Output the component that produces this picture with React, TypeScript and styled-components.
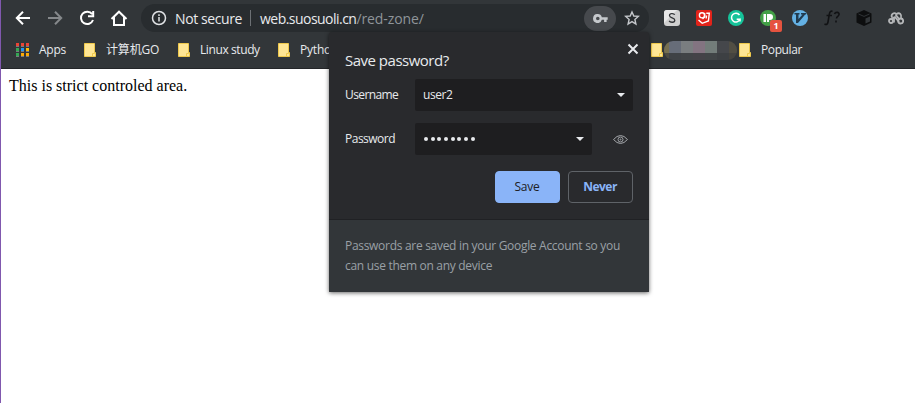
import React from 'react';
import styled, { createGlobalStyle } from 'styled-components';

const Global = createGlobalStyle`
  * { box-sizing: border-box; }
  html, body { margin: 0; background: #fff; overflow: hidden; }
  body { font-family: "Open Sans", "Noto Sans CJK SC", sans-serif; font-size: 12px; }
  svg { display: block; flex: none; }
`;

const Window = styled.div`
  position: relative;
  width: 915px;
  height: 403px;
  border-left: 1px solid #8058ae;
  background: #fff;
`;

const Chrome = styled.header`
  height: 69px;
  background: #323639;
  border-bottom: 1px solid #242629;
`;

const Toolbar = styled.div`
  display: flex;
  align-items: center;
  height: 36px;
  padding-left: 12px;
`;

const NavButton = styled.button`
  width: 20px;
  height: 20px;
  margin-right: 12px;
  padding: 0;
  border: 0;
  background: none;
`;

const Omnibox = styled.div`
  display: flex;
  align-items: center;
  width: 508px;
  height: 28px;
  padding: 0 9px 0 10px;
  border-radius: 14px;
  background: #282c2f;
`;

const Text = styled.span<{ $w?: number; $size?: number; $ls?: number; $color?: string }>`
  flex: none;
  width: ${p => (p.$w ? `${p.$w}px` : 'auto')};
  font-size: ${p => p.$size ?? 12}px;
  letter-spacing: ${p => p.$ls ?? 0}px;
  color: ${p => p.$color ?? '#e8eaed'};
  white-space: nowrap;
`;

const SecurityLabel = styled(Text)`
  margin-left: 8px;
`;

const Separator = styled.i`
  width: 1px;
  height: 16px;
  margin-right: 9px;
  background: #6c7074;
`;

const KeyPill = styled.div`
  display: grid;
  place-items: center;
  width: 32px;
  height: 25px;
  margin: 0 8px 0 auto;
  border-radius: 13px;
  background: #46494d;
`;

const Extensions = styled.div`
  display: flex;
  gap: 16px;
  margin-left: 15px;
`;

const Extension = styled.div`
  position: relative;
  width: 16px;
  height: 16px;
`;

const Badge = styled.span`
  position: absolute;
  left: 10px;
  top: 10px;
  width: 12px;
  height: 12px;
  border-radius: 2px;
  background: #e5533f;
  color: #fff;
  font: bold 9px/12px "Open Sans", sans-serif;
  text-align: center;
`;

const Bookmarks = styled.nav`
  display: flex;
  align-items: center;
  height: 28px;
  padding-left: 15px;
`;

const Bookmark = styled.div<{ $w: number }>`
  display: flex;
  align-items: center;
  gap: 10px;
  flex: none;
  width: ${p => p.$w}px;

  ${Text} {
    padding-bottom: 2px;
  }
`;

const Mosaic = styled.div`
  display: grid;
  flex: none;
  grid-template-columns: 5px 12px 12px 12px 12px 12px 8px;
  grid-template-rows: 12px 7px;
  width: 73px;
  height: 19px;
  margin: 1px 2px 0 1px;
  border-radius: 9px;
  overflow: hidden;
`;

const Cell = styled.i<{ $c: string }>`
  background: ${p => p.$c};
`;

const Page = styled.main`
  padding: 8px;
  font: 16px/18px "Liberation Serif", "Times New Roman", serif;
  color: #000;
`;

const Dialog = styled.section`
  position: absolute;
  left: 328px;
  top: 32px;
  width: 320px;
  height: 260px;
  border-radius: 3px 3px 1px 1px;
  background: #292a2d;
  box-shadow: 0 1px 4px rgba(0, 0, 0, 0.6);
  display: flex;
  flex-direction: column;
`;

const DialogBody = styled.div`
  height: 188px;
  padding: 9px 16px 0;
  border-bottom: 1px solid #202124;
`;

const TitleRow = styled.div`
  display: flex;
  justify-content: space-between;
  align-items: flex-start;
  height: 38px;
  margin-right: -8px;
`;

const Title = styled.h1`
  margin: 9px 0 0;
  font-size: 15px;
  line-height: 20px;
  font-weight: 400;
  letter-spacing: -0.5px;
  color: #e8eaed;
`;

const Field = styled.div`
  display: flex;
  align-items: center;
  height: 32px;
  margin-bottom: 12px;

  ${Text} {
    padding-bottom: 1px;
  }
`;

const Combo = styled.div<{ $w: number }>`
  display: flex;
  flex: none;
  align-items: center;
  justify-content: space-between;
  width: ${p => p.$w}px;
  height: 32px;
  padding: 0 8px;
  border-radius: 2px;
  background: #1e1e20;
`;

const Dots = styled.div`
  display: flex;
  gap: 2.67px;
  padding-left: 1px;
`;

const Dot = styled.i`
  width: 4px;
  height: 4px;
  border-radius: 50%;
  background: #e8eaed;
`;

const Actions = styled.div`
  display: flex;
  justify-content: flex-end;
  gap: 8px;
  margin-top: 16px;
`;

const Action = styled.button<{ $primary?: boolean }>`
  width: 65px;
  height: 32px;
  padding: 0 1px 1px 0;
  border: 1px solid ${p => (p.$primary ? '#8ab4f8' : '#5f6368')};
  border-radius: 4px;
  background: ${p => (p.$primary ? '#8ab4f8' : 'transparent')};
  color: ${p => (p.$primary ? '#202124' : '#8ab4f8')};
  font: ${p => (p.$primary ? 400 : 700)} 12px "Open Sans", sans-serif;
  letter-spacing: ${p => (p.$primary ? -0.2 : -0.5)}px;
`;

const Footer = styled.p`
  flex: 1;
  margin: 0;
  padding: 16px 16px 0;
  border-radius: 0 0 1px 1px;
  background: #323639;
  color: #9aa0a6;
  line-height: 20px;
  letter-spacing: -0.3px;
  white-space: nowrap;
`;

const Folder = () => (
  <svg width="12" height="14" viewBox="0 0 12 14">
    <path d="M.5.5h10v9h1v4H.5z" fill="#ffe694" stroke="#efc94c" />
    <path d="M8.5 13.5v-3h2v-1" fill="none" stroke="#efc94c" />
  </svg>
);

const Caret = () => (
  <svg width="8" height="4" viewBox="0 0 8 4"><path d="M0 0h8L4 4z" fill="#e8eaed" /></svg>
);

const appColors = ['#ea4335', '#ea4335', '#ea4335', '#34a853', '#2196f3', '#fbbc05', '#34a853', '#fbaa05', '#fbaa05'];
const AppsIcon = () => (
  <svg width="13" height="14" viewBox="0 0 13 14">
    {appColors.map((c, i) => (
      <g key={i}>
        <rect x={(i % 3) * 5} y={Math.floor(i / 3) * 5} width="3" height="3" fill={c} />
        <rect x={(i % 3) * 5} y={Math.floor(i / 3) * 5 + 3} width="3" height="1" fill="#777b7e" />
      </g>
    ))}
  </svg>
);

const navPaths = [
  'M17 10H4.2M10 3.8 3.8 10l6.2 6.2',
  'M3 10h12.8M10 3.8l6.2 6.2-6.2 6.2',
  'M15.2 6.2A6.2 6.2 0 1 0 16 12M16.2 3v5.3H11',
  'M5 9v8h10V9M2.5 11 10 3.7l7.5 7.3',
];

const mosaicTop = ['#766f50', '#676d79', '#7a7e80', '#837481', '#737d7a', '#45474b', '#514e43'];
const mosaicBottom = ['#4d4b42', '#3f4246', '#414447', '#444348', '#414547', '#3d4043', '#45443f'];

export default function App() {
  return (
    <>
      <Global />
      <Window>
        <Chrome>
          <Toolbar>
            {navPaths.map((d, i) => (
              <NavButton key={d}>
                <svg width="20" height="20" viewBox="0 0 20 20" fill="none" stroke={i === 1 ? '#85888b' : '#fff'} strokeWidth="2">
                  <path d={d} />
                </svg>
              </NavButton>
            ))}
            <Omnibox>
              <svg width="16" height="16" viewBox="0 0 16 16" fill="none" stroke="#e0e2e5" strokeWidth="1.5">
                <circle cx="8" cy="8" r="6.5" />
                <path d="M8 7v4.5M8 4.3v1.6" />
              </svg>
              <SecurityLabel $w={75} $size={14} $ls={-0.4}>Not secure</SecurityLabel>
              <Separator />
              <Text $size={14} $ls={-0.53}>web.suosuoli.cn</Text>
              <Text $size={14} $ls={-0.1} $color="#8f959a">/red-zone/</Text>
              <KeyPill>
                <svg width="15" height="9" viewBox="0 0 16 10" fill="#c5c8cc">
                  <path fillRule="evenodd" d="M5 0a5 5 0 1 0 4.5 6.5H12V9h2.8V6.5H16v-3H9.5A5 5 0 0 0 5 0zm0 3a2 2 0 1 1 0 4 2 2 0 0 1 0-4z" />
                </svg>
              </KeyPill>
              <svg width="16" height="16" viewBox="0 0 16 16" fill="none" stroke="#c5c8cc" strokeWidth="1.4">
                <path d="m8 2 1.8 4 4.5.4-3.4 3 1 4.6L8 11.6 4.1 14l1-4.6-3.4-3L6.2 6z" />
              </svg>
            </Omnibox>
            <Extensions>
              <Extension>
                <svg width="16" height="16" viewBox="0 0 16 16">
                  <rect width="16" height="16" rx="3" fill="#cfcfcf" />
                  <path d="M0 13 13 0H3a3 3 0 0 0-3 3z" fill="#e8e8e8" />
                  <path d="M10.7 4.8C9.8 3.1 5.500 3.1 5.500 5.500c0 2.7 5.3 2 5.3 4.7 0 2.7-4.6 2.500-5.700.7" fill="none" stroke="#303235" strokeWidth="1.3" />
                </svg>
              </Extension>
              <Extension>
                <svg width="16" height="16" viewBox="0 0 16 16" fill="none" stroke="#fff" strokeWidth="1.4">
                  <rect width="16" height="16" rx="2" fill="#e2231a" stroke="none" />
                  <circle cx="6" cy="5.3" r="2.6" />
                  <path d="M8.6 3v4L6.500 9M10.300 3.300h3l-.9 7.700-6.200 2.300-3.700-3.300M10.500 5.500l-.3 3" />
                </svg>
              </Extension>
              <Extension>
                <svg width="16" height="16" viewBox="0 0 16 16">
                  <circle cx="8" cy="8" r="8" fill="#15c39a" />
                  <path d="M11.5 5A4.4 4.4 0 1 0 12 9.3H8.7M12 9v2.5" fill="none" stroke="#fff" strokeWidth="1.5" />
                </svg>
              </Extension>
              <Extension>
                <svg width="16" height="16" viewBox="0 0 16 16">
                  <circle cx="8" cy="8" r="8" fill="#43a047" />
                  <path d="M3.5 4H6v8H3.5zM7 4h3a3 3 0 0 1 0 6H9v2H7z" fill="#fff" />
                </svg>
                <Badge>1</Badge>
              </Extension>
              <Extension>
                <svg width="16" height="16" viewBox="0 0 16 16">
                  <circle cx="8" cy="8" r="8" fill="#64b1e4" />
                  <path d="M2.5 3h5v1.5h-1V9l4-4.5H9V3h5v1.5h-.8L6 13H4V4.500H2.5z" fill="#203b50" />
                </svg>
              </Extension>
              <Extension>
                <svg width="16" height="16" viewBox="0 0 16 16" fill="none" stroke="#111214" strokeWidth="1.6">
                  <path d="M8.5 1.5C6 0 5.5 3 5 6l-1 6c-.4 2.3-1.5 3-3.5 2M2.5 5.5H8M10.500 4c1-2.500 5-2 4.500.5-.3 2-2.500 1.800-2.500 4M12 10.500v2" />
                </svg>
              </Extension>
              <Extension>
                <svg width="16" height="16" viewBox="0 0 16 16">
                  <path d="m8 0 7.5 3.500v9L8 16 .5 12.500v-9z" fill="#0d0e0f" />
                  <path d="m2.5 4 5.5 2.4L13.5 4" fill="none" stroke="#303437" />
                  <path d="m9.5 8.5 4.5-2v5l-4.5 2z" fill="#34383b" />
                </svg>
              </Extension>
              <Extension>
                <svg width="16" height="16" viewBox="0 0 16 16" fill="none" stroke="#b5b7b9" strokeWidth="1.8">
                  <path d="M4 7.5C2.5 4 6 2 8.5 4c3-2 5.5.5 4.5 4" />
                  <circle cx="3" cy="11" r="2" />
                  <circle cx="12.7" cy="11" r="2.5" />
                  <path d="M3.5 8.5 7 7l4 5M7.5 4.5l4 5M6 8v4.5" />
                </svg>
              </Extension>
            </Extensions>
          </Toolbar>
          <Bookmarks>
            <Bookmark $w={68}><AppsIcon /><Text $ls={-0.25}>Apps</Text></Bookmark>
            <Bookmark $w={94}><Folder /><Text $ls={-0.15}>计算机GO</Text></Bookmark>
            <Bookmark $w={100}><Folder /><Text $ls={-0.4}>Linux study</Text></Bookmark>
            <Bookmark $w={373}><Folder /><Text $ls={-0.2}>Python</Text></Bookmark>
            <Bookmark $w={12}><Folder /></Bookmark>
            <Mosaic>
              {[...mosaicTop, ...mosaicBottom].map((c, i) => <Cell key={i} $c={c} />)}
            </Mosaic>
            <Bookmark $w={70}><Folder /><Text $ls={-0.4}>Popular</Text></Bookmark>
          </Bookmarks>
        </Chrome>
        <Page>This is strict controled area.</Page>
        <Dialog>
          <DialogBody>
            <TitleRow>
              <Title>Save password?</Title>
              <svg width="16" height="16" viewBox="0 0 16 16" stroke="#e8eaed" strokeWidth="2">
                <path d="m3.5 3.5 9 9M12.5 3.500l-9 9" />
              </svg>
            </TitleRow>
            <Field>
              <Text $w={70} $ls={-0.6}>Username</Text>
              <Combo $w={218}><Text $ls={-0.4}>user2</Text><Caret /></Combo>
            </Field>
            <Field>
              <Text $w={70} $ls={-0.5}>Password</Text>
              <Combo $w={177}>
                <Dots>{Array.from({ length: 8 }, (_, i) => <Dot key={i} />)}</Dots>
                <Caret />
              </Combo>
              <svg width="41" height="16" viewBox="0 0 41 16" fill="none" stroke="#a0a3a7">
                <path d="M21.5 8.5q7-8 14 0-7 8-14 0z" />
                <circle cx="28.5" cy="8.5" r="2.5" />
                <circle cx="28.5" cy="8.5" r=".5" />
              </svg>
            </Field>
            <Actions>
              <Action $primary>Save</Action>
              <Action>Never</Action>
            </Actions>
          </DialogBody>
          <Footer>
            Passwords are saved in your Google Account so you<br />can use them on any device
          </Footer>
        </Dialog>
      </Window>
    </>
  );
}
